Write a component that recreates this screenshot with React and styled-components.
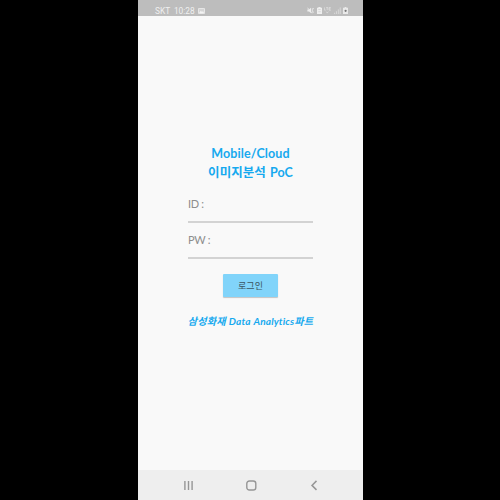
import React from "react";
import styled, { createGlobalStyle } from "styled-components";

const GlobalStyle = createGlobalStyle`
  * { box-sizing: border-box; }
  body { margin: 0; background: #000; }
`;

const Stage = styled.div`
  display: flex;
  justify-content: center;
  width: 500px;
  height: 500px;
  background: #000;
  overflow: hidden;
`;

const Phone = styled.div`
  display: flex;
  flex-direction: column;
  width: 225px;
  height: 500px;
  margin-left: 1px;
  background: #f9f9f9;
  font-family: Lato, "Noto Sans CJK KR", sans-serif;
`;

const StatusBar = styled.header`
  display: flex;
  align-items: center;
  justify-content: space-between;
  height: 16px;
  padding: 5px 15px 0 17px;
  background: #bdbdbd;
  color: #f0f0f0;
`;

const StatusGroup = styled.div`
  display: flex;
  align-items: center;
  gap: ${(p) => p.$gap}px;
  svg { display: block; }
`;

const StatusText = styled.span`
  font: 8.3px/10px Roboto, sans-serif;
  letter-spacing: ${(p) => p.$spacing || 0}px;
  white-space: nowrap;
`;

const LoginForm = styled.main`
  flex: 1;
  display: flex;
  flex-direction: column;
  align-items: center;
  padding-top: 128px;
`;

const Title = styled.h1`
  display: flex;
  flex-direction: column;
  align-items: center;
  margin: 0 0 14px;
  color: #16a9ef;
  font-size: 12.5px;
  font-weight: 700;
  line-height: 19px;
  white-space: nowrap;
`;

const TitleLine = styled.span`
  letter-spacing: ${(p) => p.$spacing}px;
  word-spacing: ${(p) => p.$gap || 0}px;
`;

const Field = styled.label`
  width: 125px;
  height: 27px;
  margin-bottom: 9px;
  border-bottom: 2px solid #d3d3d3;
  color: #8d8d8d;
  font-size: 11px;
  line-height: 16px;
  letter-spacing: ${(p) => p.$spacing || 0}px;
`;

const LoginButton = styled.button`
  width: 55px;
  height: 23px;
  margin: 6px 0 0;
  padding: 0;
  border: 0;
  border-radius: 1px;
  background: #81d4fa;
  box-shadow: 0 1px 1px rgba(0, 0, 0, 0.22);
  color: #3c5461;
  font: 9px/23px "Noto Sans CJK KR", sans-serif;
`;

const Credit = styled.p`
  margin: 16px 0 0;
  color: #16a9ef;
  font-size: 10.1px;
  font-style: italic;
  font-weight: 700;
  line-height: 16px;
  letter-spacing: 0.15px;
  word-spacing: 0.8px;
  white-space: nowrap;
`;

const NavBar = styled.nav`
  display: grid;
  grid-template-columns: 63px 63px 11px;
  align-items: center;
  height: 30px;
  padding: 1px 0 0 45px;
  background: #eee;
  svg { display: block; }
`;

const PhotoIcon = () => (
  <svg width="7" height="6" viewBox="0 0 7 6">
    <rect x=".4" y=".4" width="6.2" height="5.2" rx=".7" fill="#d5d5d5" stroke="#f2f2f2" strokeWidth=".8" />
    <path d="M1 4.9 2.8 2.8 4 4 5 3 6 4.9Z" fill="#f4f4f4" />
  </svg>
);

const MuteIcon = () => (
  <svg width="7" height="7" viewBox="0 0 7 7" fill="none" stroke="#eee" strokeWidth=".8">
    <path d="M.4 2.4H2L4 .8V6L2 4.5H.4Z" fill="#eee" stroke="none" />
    <path d="M.5.7 5 6.3M5.3 1.2v4.5M6.5 1.2v1M6.5 4.6v1" />
  </svg>
);

const SaverIcon = () => (
  <svg width="5" height="7" viewBox="0 0 5 7">
    <path d="M1.4 0h2.2v.8H5V7H0V.8h1.4Z" fill="#eee" />
    <path d="M1.3 2.5h2.4M1.3 4.7h2.4" stroke="#cfcfcf" strokeWidth=".7" />
  </svg>
);

const LteIcon = () => (
  <svg width="7" height="7" viewBox="0 0 7 7" fill="none" stroke="#e2e2e2" strokeWidth=".7">
    <path d="M.4.4v2.7h1.4M2.2.6h2M3.2.6v2.6M6.8.6H5v2.6h1.8M5 1.9h1.6M2.3 4.6l1 1.5 1-1.5" />
  </svg>
);

const SignalIcon = () => (
  <svg width="7" height="7" viewBox="0 0 7 7" stroke="#dedede" strokeWidth=".8">
    <path d="M.6 5.7V7M2.4 4.2V7M4.3 2.3V7M6.2.4V7" />
  </svg>
);

const BatteryIcon = () => (
  <svg width="5" height="7" viewBox="0 0 5 7">
    <path d="M1.6 0h1.8v.8H5V7H0V.8h1.6Z" fill="#e9e9e9" />
    <circle cx="2.6" cy="3.8" r="1.1" fill="#777" />
  </svg>
);

const RecentsIcon = () => (
  <svg width="13" height="11" viewBox="0 0 13 11" stroke="#969696" strokeWidth="1.4">
    <path d="M1.9 1v9M5.5 1v9M9.1 1v9" />
  </svg>
);

const HomeIcon = () => (
  <svg width="11" height="11" viewBox="0 0 11 11" fill="none" stroke="#969696" strokeWidth="1.4">
    <rect x=".8" y="1" width="9" height="9" rx="2.6" />
  </svg>
);

const BackIcon = () => (
  <svg width="11" height="11" viewBox="0 0 11 11" fill="none" stroke="#969696" strokeWidth="1.5">
    <path d="M7.5.9 3 5.4l4.5 4.5" />
  </svg>
);

export default function App() {
  return (
    <Stage>
      <GlobalStyle />
      <Phone>
        <StatusBar>
          <StatusGroup $gap={3.5}>
            <StatusText $spacing={0.1}>SKT</StatusText>
            <StatusText>10:28</StatusText>
            <PhotoIcon />
          </StatusGroup>
          <StatusGroup $gap={2.5}>
            <MuteIcon />
            <SaverIcon />
            <LteIcon />
            <SignalIcon />
            <BatteryIcon />
          </StatusGroup>
        </StatusBar>
        <LoginForm>
          <Title>
            <TitleLine $spacing={0.1}>Mobile/Cloud</TitleLine>
            <TitleLine $spacing={0.05} $gap={1}>이미지분석 PoC</TitleLine>
          </Title>
          <Field $spacing={-0.3}>ID :</Field>
          <Field $spacing={-0.3}>PW :</Field>
          <LoginButton type="button">로그인</LoginButton>
          <Credit>삼성화재 Data Analytics파트</Credit>
        </LoginForm>
        <NavBar>
          <RecentsIcon />
          <HomeIcon />
          <BackIcon />
        </NavBar>
      </Phone>
    </Stage>
  );
}
